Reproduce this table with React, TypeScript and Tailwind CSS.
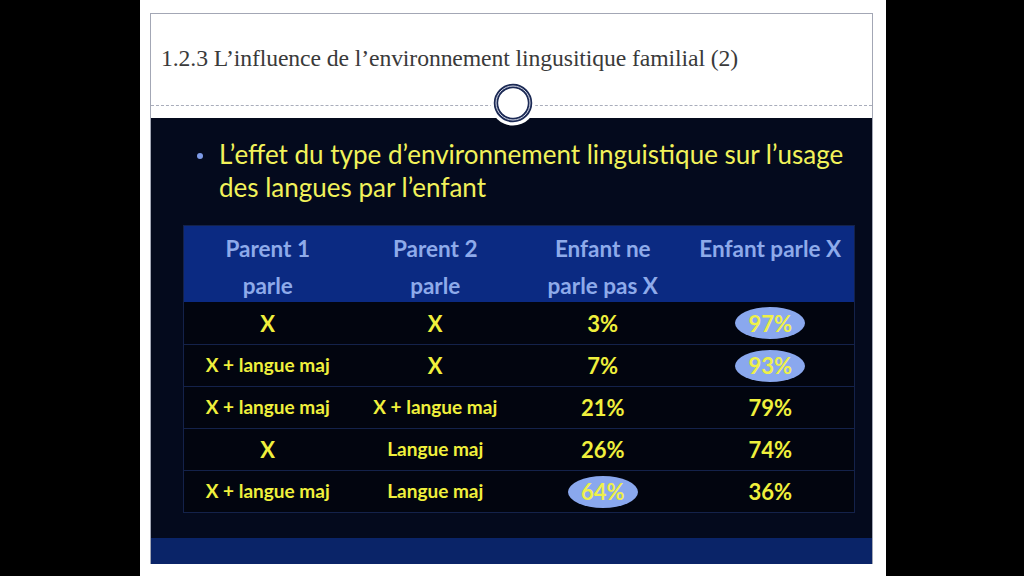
import React from 'react';

type Cell = { text: string; big?: boolean; mark?: boolean };

const rows: Cell[][] = [
  [{ text: 'X', big: true }, { text: 'X', big: true }, { text: '3%', big: true }, { text: '97%', big: true, mark: true }],
  [{ text: 'X + langue maj' }, { text: 'X', big: true }, { text: '7%', big: true }, { text: '93%', big: true, mark: true }],
  [{ text: 'X + langue maj' }, { text: 'X + langue maj' }, { text: '21%', big: true }, { text: '79%', big: true }],
  [{ text: 'X', big: true }, { text: 'Langue maj' }, { text: '26%', big: true }, { text: '74%', big: true }],
  [{ text: 'X + langue maj' }, { text: 'Langue maj' }, { text: '64%', big: true, mark: true }, { text: '36%', big: true }],
];

const headers = [
  ['Parent 1', 'parle'],
  ['Parent 2', 'parle'],
  ['Enfant ne', 'parle pas X'],
  ['Enfant parle X'],
];

const Ornament: React.FC = () => (
  <svg width="46" height="46" viewBox="0 0 46 46">
    <circle cx="23" cy="23" r="22.5" fill="#fff" />
    <circle cx="23" cy="23" r="17" fill="none" stroke="#1c2a55" strokeWidth="4.5" />
    <circle cx="23" cy="23" r="17" fill="none" stroke="#d8dcea" strokeWidth="1" />
    <circle cx="23" cy="23" r="14.3" fill="#fff" />
  </svg>
);

export default function App() {
  return (
    <div className="w-[1024px] h-[576px] bg-black pl-[140px] overflow-hidden">
      <div className="w-[746px] h-[576px] bg-white pt-[13px] pl-[10px]">
        <div className="w-[723px] border-t border-x border-[#a3a7b5] flex flex-col">
          {/* header */}
          <div className="relative h-[104px]">
            <h1
              className="pl-[10px] pt-[29px] text-[23.7px] leading-[30px] text-[#3a3a3a] tracking-[-0.1px]"
              style={{ fontFamily: '"Liberation Serif", serif' }}
            >
              1.2.3 L’influence de l’environnement lingusitique familial (2)
            </h1>
            <div className="absolute left-0 right-0 top-[91px] border-t border-dashed border-[#a9adbb]" />
            <div className="absolute left-[339px] top-[66px]">
              <Ornament />
            </div>
          </div>

          {/* body */}
          <div
            className="h-[420px] bg-[#040a1d] pt-[20px] flex flex-col"
            style={{ fontFamily: 'Lato, "Open Sans", sans-serif' }}
          >
            <div className="flex pl-[46px]">
              <span className="w-[6px] h-[6px] rounded-full bg-[#7d9ae6] mt-[15px] mr-[16px] shrink-0" />
              <p className="w-[650px] text-[#f2f25a] text-[26px] leading-[33px]">
                L’effet du type d’environnement linguistique sur l’usage des langues par l’enfant
              </p>
            </div>

            <div className="ml-[32px] mt-[21px] w-[672px] border border-[#14224a] bg-[#02050f]">
              <div className="grid grid-cols-4 h-[76px] bg-[#0b2a82] pt-[4px]">
                {headers.map((h, i) => (
                  <div key={i} className="flex flex-col items-center text-[#8eaaea] font-bold text-[22.5px] leading-[37px]">
                    {h.map((line) => (
                      <span key={line}>{line}</span>
                    ))}
                  </div>
                ))}
              </div>
              {rows.map((r, i) => (
                <div key={i} className={`grid grid-cols-4 h-[42px] ${i > 0 ? 'border-t border-[#14224a]' : ''}`}>
                  {r.map((c, j) => (
                    <div key={j} className="flex items-center justify-center">
                      {c.mark ? (
                        <span className="w-[70px] h-[32px] rounded-[50%] bg-[#8aa8ee] flex items-center justify-center text-[#eef04a] font-bold text-[22px]">
                          {c.text}
                        </span>
                      ) : (
                        <span className={`text-[#f0f03c] font-bold ${c.big ? 'text-[22px]' : 'text-[19px]'}`}>
                          {c.text}
                        </span>
                      )}
                    </div>
                  ))}
                </div>
              ))}
            </div>
          </div>

          {/* footer bar */}
          <div className="h-[26px] bg-[#0a2468]" />
        </div>
      </div>
    </div>
  );
}
